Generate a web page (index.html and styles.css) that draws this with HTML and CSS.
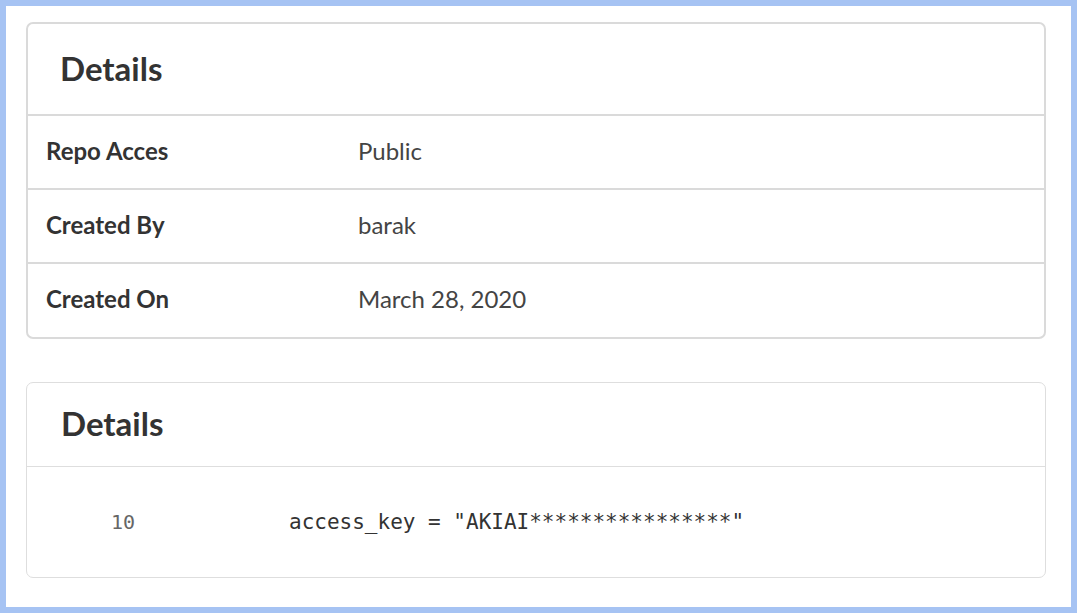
FILE: index.html
```html
<!DOCTYPE html>
<html>
<head>
<meta charset="utf-8">
<link rel="stylesheet" href="styles.css">
</head>
<body>
<div class="frame">
  <section class="card card-table">
    <header class="card-head"><h2 class="card-title">Details</h2></header>
    <div class="row"><div class="label">Repo Acces</div><div class="value">Public</div></div>
    <div class="row"><div class="label">Created By</div><div class="value">barak</div></div>
    <div class="row"><div class="label">Created On</div><div class="value">March 28, 2020</div></div>
  </section>
  <section class="card card-code">
    <header class="card-head code-head"><h2 class="card-title">Details</h2></header>
    <div class="code-row">
      <span class="line-no">10</span>
      <code class="code">access_key = "AKIAI****************"</code>
    </div>
  </section>
</div>
</body>
</html>
```
FILE: styles.css
```css
* { box-sizing: border-box; }
html, body { margin: 0; padding: 0; background: #fff; }
body { font-family: "Lato", "Liberation Sans", sans-serif; color: #333; }
.frame {
  width: 1077px;
  height: 613px;
  border: 6px solid #a6c3f3;
  padding: 16px 25px 0 20px;
  display: flex;
  flex-direction: column;
  gap: 43px;
}
.card {
  width: 1020px;
  background: #fff;
  border-radius: 7px;
}
.card-table { border: 2px solid #dadada; }
.card-code { border: 1px solid #dedede; }
.card-head {
  height: 92px;
  display: flex;
  align-items: center;
  padding-left: 32px;
  border-bottom: 2px solid #dadada;
}
.code-head {
  height: 84px;
  padding-left: 34px;
  border-bottom: 1px solid #dedede;
}
.card-title {
  margin: 0;
  font-size: 33px;
  font-weight: 700;
  color: #333;
  padding-bottom: 2px;
}
.code-head .card-title { padding-bottom: 4px; }
.row {
  display: grid;
  grid-template-columns: 312px 1fr;
  align-items: center;
  height: 74px;
  padding: 0 18px 4px;
  border-bottom: 2px solid #dadada;
}
.row:last-child { border-bottom: none; height: 73px; }
.label { font-size: 24px; font-weight: 700; color: #333; }
.value { font-size: 24px; color: #444; }
.code-row {
  display: flex;
  align-items: center;
  height: 110px;
  padding-left: 84px;
}
.line-no {
  width: 178px;
  font-family: "DejaVu Sans Mono", monospace;
  font-size: 20px;
  color: #666;
}
.code {
  font-family: "DejaVu Sans Mono", monospace;
  font-size: 21px;
  color: #333;
}
```
